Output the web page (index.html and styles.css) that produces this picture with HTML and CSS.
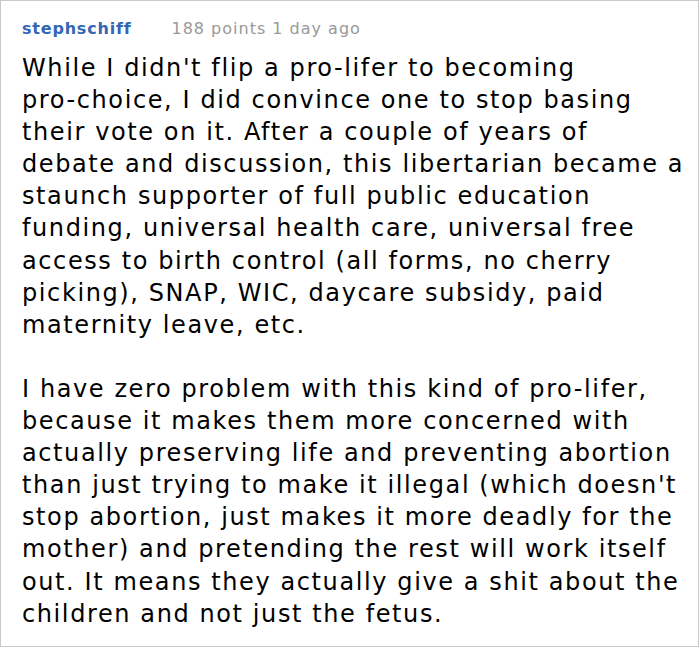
FILE: index.html
```html
<!DOCTYPE html>
<html>
<head>
<meta charset="utf-8">
<link rel="stylesheet" href="styles.css">
</head>
<body>
<div class="comment">
  <div class="meta">
    <span class="author">stephschiff</span>
    <span class="info">188 points 1 day ago</span>
  </div>
  <div class="body">
    <p>While I didn't flip a pro-lifer to becoming<br>pro-choice, I did convince one to stop basing<br>their vote on it. After a couple of years of<br>debate and discussion, this libertarian became a<br>staunch supporter of full public education<br>funding, universal health care, universal free<br>access to birth control (all forms, no cherry<br>picking), SNAP, WIC, daycare subsidy, paid<br>maternity leave, etc.</p>
    <p>I have zero problem with this kind of pro-lifer,<br>because it makes them more concerned with<br>actually preserving life and preventing abortion<br>than just trying to make it illegal (which doesn't<br>stop abortion, just makes it more deadly for the<br>mother) and pretending the rest will work itself<br>out. It means they actually give a shit about the<br>children and not just the fetus.</p>
  </div>
</div>
</body>
</html>
```
FILE: styles.css
```css
html, body {
  margin: 0;
  padding: 0;
  background: #fff;
}
.comment {
  box-sizing: border-box;
  width: 699px;
  height: 647px;
  border: 1px solid #c8c8c8;
  padding: 15px 0 0 21px;
  font-family: "DejaVu Sans", Verdana, sans-serif;
  color: #000;
}
.meta {
  display: flex;
  align-items: baseline;
  gap: 40px;
  font-size: 16px;
  line-height: 26px;
  margin-bottom: 10px;
}
.author {
  color: #3366b3;
  font-weight: bold;
  letter-spacing: 0.8px;
}
.info {
  color: #999;
  letter-spacing: 1px;
}
.body {
  font-size: 24px;
  line-height: 32.1px;
  letter-spacing: 1.6px;
}
.body p {
  margin: 0 0 32.1px 0;
}
```
